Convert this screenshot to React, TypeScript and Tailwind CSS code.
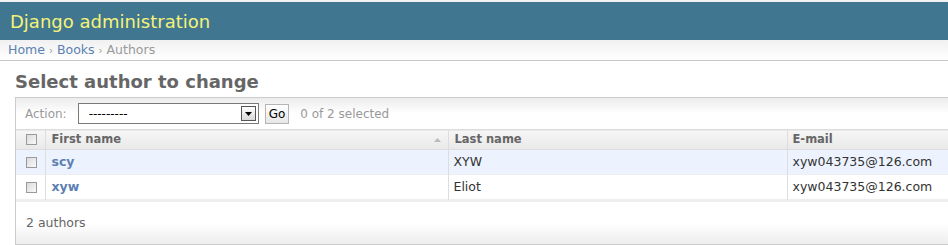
const FONT = "font-['DejaVu_Sans',Verdana,sans-serif]"

const ROWS = [
  { first: 'scy', last: 'XYW', email: 'xyw043735@126.com', alt: true },
  { first: 'xyw', last: 'Eliot', email: 'xyw043735@126.com', alt: false },
]

function Check() {
  return <span className="block h-[11px] w-[11px] border border-[#9a9a9a] bg-gradient-to-br from-[#dcdcdc] to-[#f8f8f8]" />
}

export default function App() {
  return (
    <div className={`${FONT} h-[245px] w-[948px] overflow-hidden bg-white text-[#333]`}>
      <div className="h-[2px] bg-[#f2f2f2]" />
      <div className="flex h-[38px] items-center bg-[#417690] pl-[10px]">
        <span className="text-[18px] text-[#f4f379]">Django administration</span>
      </div>
      <div className="flex h-[21px] items-center border-b border-[#c8c8c8] bg-gradient-to-b from-[#f1f1f1] to-white pl-[8px] text-[12.5px] text-[#999]">
        <span className="text-[#5b80b2]">Home</span>
        <span className="px-[4px] text-[10px]">›</span>
        <span className="text-[#5b80b2]">Books</span>
        <span className="px-[4px] text-[10px]">›</span>
        <span>Authors</span>
      </div>
      <h1 className="pl-[15px] pt-[9px] text-[18px] font-bold leading-[24px] text-[#666]">Select author to change</h1>
      <div className="ml-[15px] mt-[3px] w-[1000px] border-l border-t border-[#ccc]">
        <div className="flex h-[31px] items-center bg-gradient-to-b from-[#ececec] via-white to-white pl-[9px] text-[12px]">
          <span className="text-[#999]">Action:</span>
          <div className="ml-[11px] flex h-[21px] w-[181px] items-center justify-between border border-[#7a7a7a] bg-white pl-[10px] pr-[2px]">
            <span className="text-[12px] leading-none text-black">---------</span>
            <span className="flex h-[15px] w-[15px] items-center justify-center border border-[#555] bg-gradient-to-b from-white to-[#d8d8d8]">
              <svg width="7" height="4" viewBox="0 0 7 4"><path d="M0 0h7L3.5 4z" fill="#000" /></svg>
            </span>
          </div>
          <span className="ml-[6px] flex h-[20px] items-center border border-[#b5b5b5] bg-gradient-to-b from-white to-[#e6e6e6] px-[3px] text-[12px] text-black">Go</span>
          <span className="ml-[11px] text-[#999]">0 of 2 selected</span>
        </div>
        <table className="w-[1000px] table-fixed border-collapse text-[11.5px]">
          <colgroup>
            <col className="w-[29px]" />
            <col className="w-[403px]" />
            <col className="w-[339px]" />
            <col />
          </colgroup>
          <thead>
            <tr className="h-[20px] border-y border-[#ddd] bg-gradient-to-b from-[#f6f6f6] to-[#e9e9e9] text-left font-bold text-[#666]">
              <th className="pl-[10px]"><Check /></th>
              <th className="border-l border-[#ddd] pl-[6px]">
                <div className="flex items-center justify-between pr-[7px]">
                  <span>First name</span>
                  <svg width="7" height="4" viewBox="0 0 7 4"><path d="M3.5 0L7 4H0z" fill="#bbb" /></svg>
                </div>
              </th>
              <th className="border-l border-[#ddd] pl-[6px]">Last name</th>
              <th className="border-l border-[#ddd] pl-[5px]">E-mail</th>
            </tr>
          </thead>
          <tbody className="text-[12.5px]">
            {ROWS.map(r => (
              <tr key={r.first} className={`h-[25px] border-b border-[#eee] ${r.alt ? 'bg-[#edf3fe]' : 'bg-white'}`}>
                <td className="pl-[10px]"><Check /></td>
                <td className="border-l border-[#ddd] pl-[6px] font-bold text-[#5b80b2]">{r.first}</td>
                <td className="border-l border-[#ddd] pl-[5px]">{r.last}</td>
                <td className="border-l border-[#ddd] pl-[5px]">{r.email}</td>
              </tr>
            ))}
          </tbody>
        </table>
        <div className="flex h-[45px] items-center border-b border-t-[2px] border-b-[#ccc] border-t-[#eee] bg-gradient-to-b from-white via-white to-[#ededed] pl-[10px] text-[12.5px] text-[#666]">
          2 authors
        </div>
      </div>
    </div>
  )
}
